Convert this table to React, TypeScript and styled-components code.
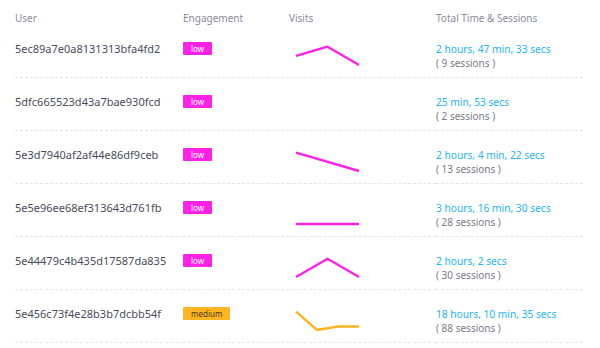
import { Fragment } from 'react'
import styled, { createGlobalStyle } from 'styled-components'

const GlobalStyle = createGlobalStyle`
  html, body {
    margin: 0;
    padding: 0;
    background: #ffffff;
  }

  body {
    font-family: 'Noto Sans', 'Open Sans', sans-serif;
  }
`

const colors = {
  low: '#ff22e6',
  medium: '#ffb424',
  blue: '#22b4f8',
  text: '#4b4b58',
  muted: '#8b8b98',
  line: '#e4e4ec'
}

type Level = 'low' | 'medium'

type Row = {
  user: string
  level: Level
  visits: number[]
  time: string
  sessions: number
}

const rows: Row[] = [
  { user: '5ec89a7e0a8131313bfa4fd2', level: 'low', visits: [1, 2, 0], time: '2 hours, 47 min, 33 secs', sessions: 9 },
  { user: '5dfc665523d43a7bae930fcd', level: 'low', visits: [1], time: '25 min, 53 secs', sessions: 2 },
  { user: '5e3d7940af2af44e86df9ceb', level: 'low', visits: [1, 0], time: '2 hours, 4 min, 22 secs', sessions: 13 },
  { user: '5e5e96ee68ef313643d761fb', level: 'low', visits: [1, 1, 1, 1], time: '3 hours, 16 min, 30 secs', sessions: 28 },
  { user: '5e44479c4b435d17587da835', level: 'low', visits: [0, 1, 0], time: '2 hours, 2 secs', sessions: 30 },
  { user: '5e456c73f4e28b3b7dcbb54f', level: 'medium', visits: [1, 0, 0.19, 0.19], time: '18 hours, 10 min, 35 secs', sessions: 88 }
]

const Table = styled.div`
  width: 568px;
  margin-left: 15px;
  display: grid;
  grid-template-columns: 168px 106px 147px 1fr;
`

const HeadCell = styled.div`
  height: 25px;
  padding-top: 11px;
  box-sizing: border-box;
  font-size: 10px;
  line-height: 14px;
  color: ${colors.muted};
  white-space: nowrap;
`

const Cell = styled.div`
  height: 53px;
  box-sizing: border-box;
  padding-top: 17px;
  border-bottom: 1px dashed ${colors.line};
`

const UserId = styled.div`
  font-size: 11px;
  line-height: 14px;
  color: ${colors.text};
  white-space: nowrap;
`

const Badge = styled.div<{ $level: Level }>`
  width: fit-content;
  height: 13px;
  padding: 0 8px;
  font-size: 8px;
  line-height: 13px;
  border-radius: 1px;
  background: ${p => colors[p.$level]};
  color: ${p => (p.$level === 'low' ? '#ffffff' : '#4a3a10')};
`

const Spark = styled.svg`
  display: block;
  margin-left: 4px;
`

const TimeText = styled.div`
  font-size: 10.2px;
  line-height: 14px;
  color: ${colors.blue};
  white-space: nowrap;
`

const Sessions = styled.div`
  font-size: 10px;
  line-height: 14px;
  color: #7a7a86;
  white-space: nowrap;
`

const Sparkline = ({ values, color }: { values: number[]; color: string }) => {
  const w = 70
  const h = 28
  const top = 4.7
  const span = 18.3
  const max = Math.max(...values)
  const min = Math.min(...values)
  const pts = values.map((v, i) => {
    const x = 3 + (values.length > 1 ? (i * 63) / (values.length - 1) : 0)
    const n = max === min ? 0 : (v - min) / (max - min)
    const y = top + (1 - n) * span
    return `${x.toFixed(1)},${y.toFixed(1)}`
  })
  return (
    <Spark width={w} height={h} viewBox={`0 0 ${w} ${h}`}>
      {values.length > 1 && (
        <polyline
          points={pts.join(' ')}
          fill="none"
          stroke={color}
          strokeWidth={2.4}
          strokeLinejoin="round"
        />
      )}
    </Spark>
  )
}

export default function App() {
  return (
    <>
      <GlobalStyle />
      <Table>
        <HeadCell>User</HeadCell>
        <HeadCell>Engagement</HeadCell>
        <HeadCell>Visits</HeadCell>
        <HeadCell>Total Time &amp; Sessions</HeadCell>
        {rows.map(r => (
          <Fragment key={r.user}>
            <Cell>
              <UserId>{r.user}</UserId>
            </Cell>
            <Cell>
              <Badge $level={r.level}>{r.level}</Badge>
            </Cell>
            <Cell>
              <Sparkline values={r.visits} color={colors[r.level]} />
            </Cell>
            <Cell>
              <TimeText>{r.time}</TimeText>
              <Sessions>( {r.sessions} sessions )</Sessions>
            </Cell>
          </Fragment>
        ))}
      </Table>
    </>
  )
}
